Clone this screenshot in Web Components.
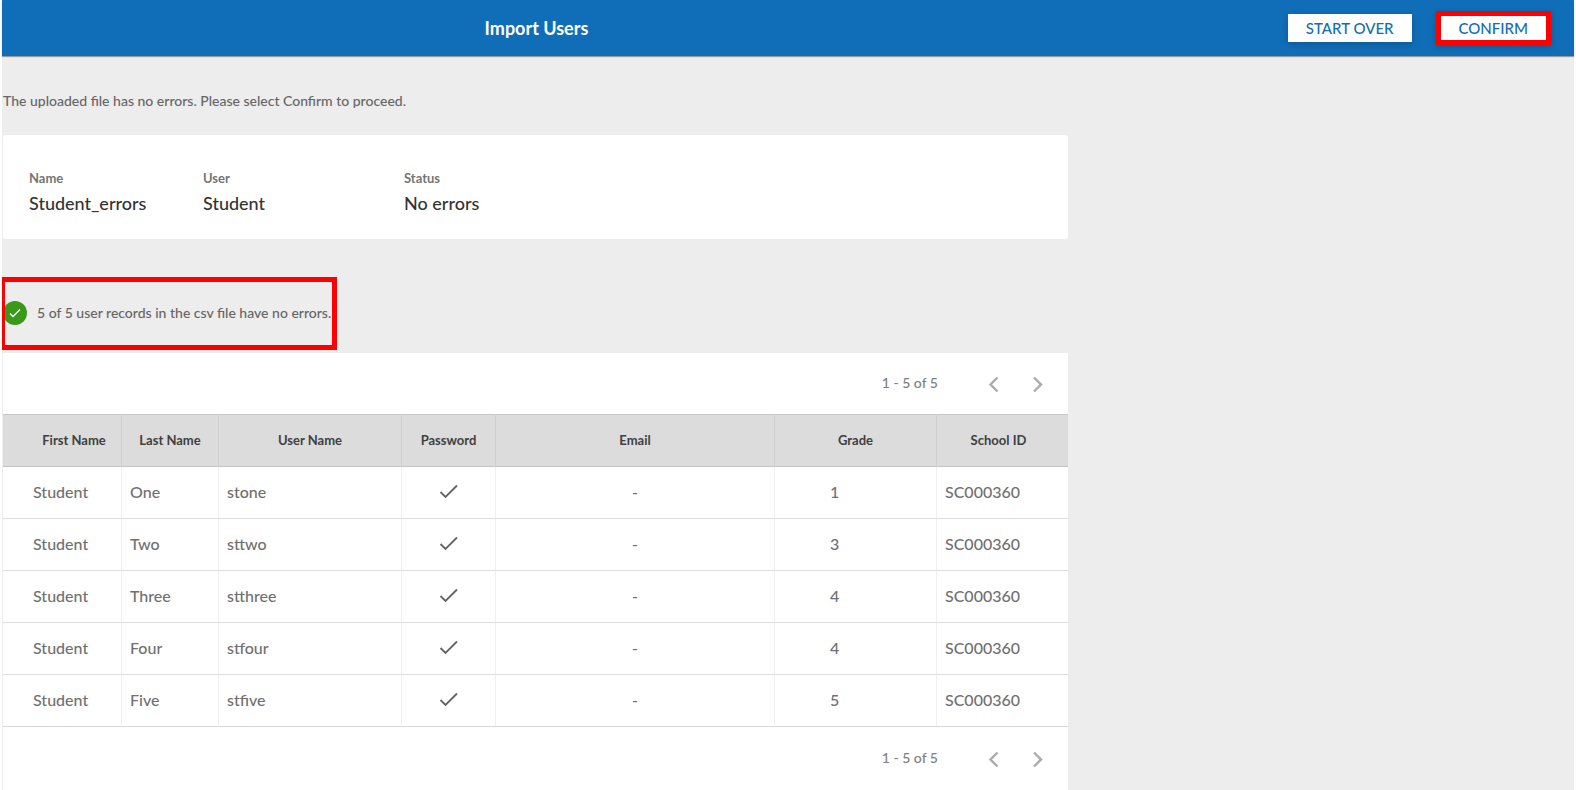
<!DOCTYPE html>
<html lang="en">
<head>
<meta charset="utf-8">
<title>Import Users</title>
<style>
  html { background: #fff; }
  body {
    margin: 0;
    font-family: Lato, "Open Sans", sans-serif;
    font-size: 14px;
    font-weight: 500;
    line-height: 20px;
    color: #666;
  }
</style>
</head>
<body>
<import-page>
  <import-header slot="header" heading="Import Users">
    <action-button>START OVER</action-button>
    <action-button marked>CONFIRM</action-button>
  </import-header>
  <span slot="message">The uploaded file has no errors. Please select Confirm to proceed.</span>
  <file-summary>
    <summary-field label="Name">Student_errors</summary-field>
    <summary-field label="User">Student</summary-field>
    <summary-field label="Status">No errors</summary-field>
  </file-summary>
  <status-note>5 of 5 user records in the csv file have no errors.</status-note>
  <user-table></user-table>
</import-page>

<script>
const define = (name, html, setup) => {
  const template = document.createElement('template');
  template.innerHTML = html;
  customElements.define(name, class extends HTMLElement {
    constructor() {
      super();
      this.attachShadow({ mode: 'open' }).append(template.content.cloneNode(true));
    }
    connectedCallback() {
      if (setup) setup(this, this.shadowRoot);
    }
  });
};

define('import-page', `
  <style>
    :host { display: block; box-sizing: border-box; min-height: 100vh; padding: 0 2px; background: #fff; }
    .page { min-height: 100vh; background: #ededed; }
    main { max-width: 1065px; padding-left: 1px; }
    p { margin: 0; padding: 35px 0 24px; }
  </style>
  <div class="page">
    <slot name="header"></slot>
    <main>
      <p><slot name="message"></slot></p>
      <slot></slot>
    </main>
  </div>`);

define('import-header', `
  <style>
    :host { display: block; background: #106db7; box-shadow: 0 1px 1px rgba(0,0,0,.35); }
    header { display: grid; grid-template-columns: 68% 1fr; align-items: center; height: 56px; }
    h1 { margin: 0; font-size: 18px; line-height: 24px; font-weight: 700; color: #fff; text-align: center; }
    nav { display: flex; justify-content: flex-end; align-items: center; gap: 24px; padding-right: 23px; }
  </style>
  <header><h1></h1><nav><slot></slot></nav></header>`,
  (el, root) => { root.querySelector('h1').textContent = el.getAttribute('heading'); });

define('action-button', `
  <style>
    :host { display: block; }
    button {
      display: block; height: 28px; padding: 0 18px; border: 0; background: #fff;
      color: #106db7; font: inherit; font-size: 15px; line-height: 26px;
      box-shadow: 0 2px 6px rgba(0,0,0,.2); cursor: pointer;
    }
    :host([marked]) button { height: 34px; border: 5px solid #f00; line-height: 22px; }
  </style>
  <button type="button"><slot></slot></button>`);

define('file-summary', `
  <style>
    :host { display: block; background: #fff; border-radius: 3px; }
    dl { display: flex; margin: 0; padding: 33px 26px 24px; }
    ::slotted(*) { flex: 0 0 201px; }
    ::slotted(:first-child) { flex-basis: 174px; }
  </style>
  <dl><slot></slot></dl>`);

define('summary-field', `
  <style>
    :host { display: block; }
    dt { font-size: 13px; line-height: 20px; font-weight: 700; color: #757575; }
    dd { margin: 0; padding-top: 3px; font-size: 18px; line-height: 24px; color: #333; }
  </style>
  <dt></dt><dd><slot></slot></dd>`,
  (el, root) => { root.querySelector('dt').textContent = el.getAttribute('label'); });

define('status-note', `
  <style>
    :host { display: block; padding: 38px 0 3px; }
    div {
      display: flex; align-items: center; gap: 10px; box-sizing: border-box;
      width: 335px; height: 73px; margin-left: -1px; padding-bottom: 2px;
      border: 5px solid #f00; border-left-width: 3px; white-space: nowrap;
    }
    svg { flex: none; width: 22px; height: 24px; }
  </style>
  <div>
    <svg viewBox="2 0 22 24" aria-hidden="true">
      <circle cx="12" cy="12" r="12" fill="#38991a"/>
      <path d="M7 12.500l3 3 7-7" fill="none" stroke="#fff" stroke-width="1.300"/>
    </svg>
    <span><slot></slot></span>
  </div>`);

define('page-control', `
  <style>
    :host { display: block; background: #fff; }
    nav { display: flex; justify-content: flex-end; align-items: center; height: 61px; padding-right: 18px; }
    :host([position="bottom"]) nav { height: 63px; }
    span { margin-right: 44px; padding-bottom: 2px; color: #808080; }
    button { display: grid; place-items: center; width: 24px; height: 24px; margin-left: 20px; padding: 0; border: 0; background: none; color: #ababab; }
    span + button { margin-left: 0; }
    svg { display: block; width: 24px; height: 24px; fill: none; stroke: currentColor; stroke-width: 2.4; }
  </style>
  <nav aria-label="Table pages">
    <span>1 - 5 of 5</span>
    <button type="button" aria-label="Previous page"><svg viewBox="0 0 24 24"><path d="M15.500 5.500l-7 7 7 7"/></svg></button>
    <button type="button" aria-label="Next page"><svg viewBox="0 0 24 24"><path d="M8 5.500l7 7-7 7"/></svg></button>
  </nav>`);

define('check-mark', `
  <style>
    :host { display: grid; place-items: center; }
    svg { width: 20px; height: 16px; fill: none; stroke: #666; stroke-width: 1.9; }
  </style>
  <svg viewBox="0 0 20 16" role="img" aria-label="Set"><path d="M1.500 8l5 5L18 1.500"/></svg>`);

define('user-table', `
  <style>
    :host { display: block; background: #fff; }
    table { width: 100%; table-layout: fixed; border-collapse: separate; border-spacing: 0; }
    th, td { box-sizing: border-box; height: 52px; padding: 0 8px; border-bottom: 1px solid #dedede; border-right: 1px solid #efefef; }
    th { height: 53px; background: #dcdcdc; border-color: #cfcfcf; border-bottom-color: #c3c3c3; box-shadow: inset 0 1px #c8c8c8; font-size: 13px; font-weight: 700; color: #404040; }
    th:last-child, td:last-child { border-right: 0; }
    th:last-child { padding-right: 16px; }
    td { padding-bottom: 2px; font-size: 16px; text-align: left; color: #707070; }
    th:first-child { padding: 0 0 0 24px; }
    td:first-child { padding-left: 30px; }
    td.center { text-align: center; }
    td.grade { padding-left: 55px; }
    tbody tr:last-child td { border-bottom-color: #d6d6d6; }
  </style>
  <page-control></page-control>
  <table>
    <colgroup>
      <col style="width:119px"><col style="width:97px"><col style="width:183px"><col style="width:94px">
      <col style="width:279px"><col style="width:162px"><col>
    </colgroup>
    <thead><tr>
      <th scope="col">First Name</th><th scope="col">Last Name</th><th scope="col">User Name</th>
      <th scope="col">Password</th><th scope="col">Email</th><th scope="col">Grade</th><th scope="col">School ID</th>
    </tr></thead>
    <tbody></tbody>
  </table>
  <page-control position="bottom"></page-control>`,
  (el, root) => {
    const users = [
      ['Student', 'One', 'stone', 1],
      ['Student', 'Two', 'sttwo', 3],
      ['Student', 'Three', 'stthree', 4],
      ['Student', 'Four', 'stfour', 4],
      ['Student', 'Five', 'stfive', 5],
    ];
    root.querySelector('tbody').innerHTML = users.map(([first, last, login, grade]) => `
      <tr><td>${first}</td><td>${last}</td><td>${login}</td><td><check-mark></check-mark></td>
      <td class="center">-</td><td class="grade">${grade}</td><td>SC000360</td></tr>`).join('');
  });
</script>
</body>
</html>
